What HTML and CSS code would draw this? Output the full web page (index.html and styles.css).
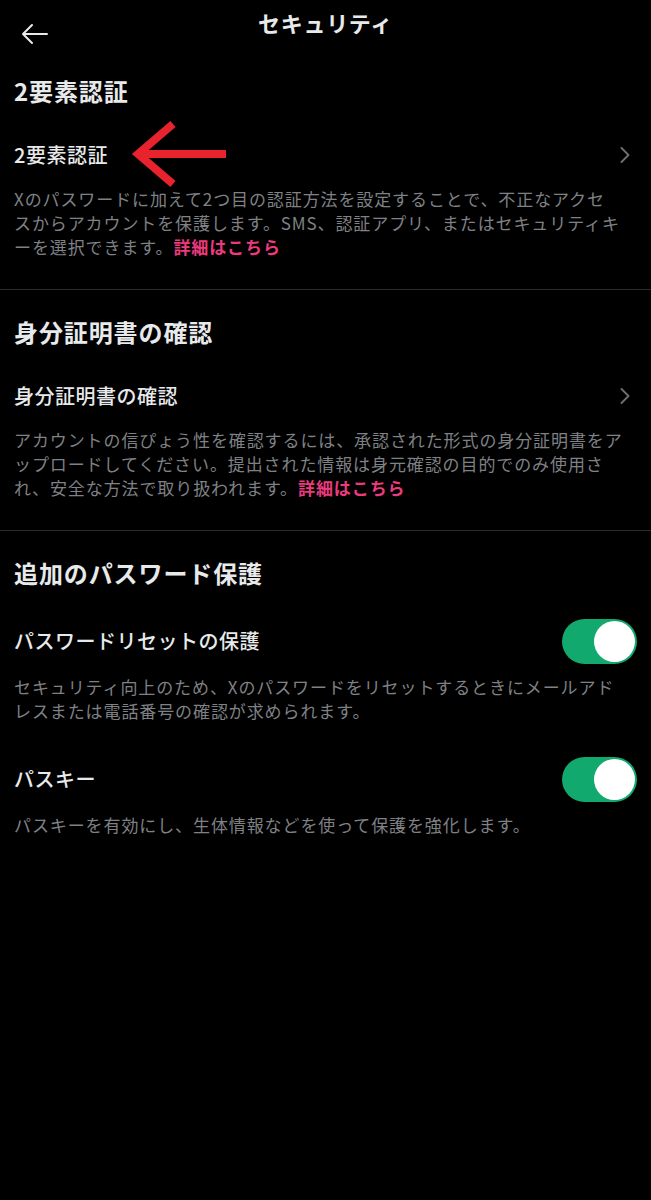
FILE: index.html
```html
<!DOCTYPE html>
<html lang="ja">
<head>
    <meta charset="utf-8">
    <link rel="stylesheet" href="styles.css">
    <title>セキュリティ</title>
</head>
<body>
    <header class="topbar">
        <button class="back-button" aria-label="戻る">
            <svg width="28" height="22" viewBox="0 0 28 22" fill="none" stroke="#e7e9ea" stroke-width="2" stroke-linecap="round" stroke-linejoin="round">
                <path d="M2 11 H26 M11 2 L2 11 L11 20"/>
            </svg>
        </button>
        <h1 class="topbar-title">セキュリティ</h1>
        <div></div>
    </header>

    <section class="group">
        <h2 class="group-title">2要素認証</h2>
        <div class="item">
            <div class="item-row">
                <span class="item-label">2要素認証</span>
                <svg class="chevron" width="10" height="16" viewBox="0 0 10 16" fill="none" stroke="#6e7276" stroke-width="1.8" stroke-linecap="round" stroke-linejoin="round">
                    <path d="M1.5 1 L8.5 8 L1.5 15"/>
                </svg>
                <!-- annotation arrow -->
                <svg class="annotation" width="102" height="68" viewBox="0 0 102 68" fill="none" stroke="#e8232d" stroke-width="8">
                    <path d="M45 4 L10 34 L45 64 M10 34 H98"/>
                </svg>
            </div>
            <p class="item-desc">Xのパスワードに加えて2つ目の認証方法を設定することで、不正なアクセ<br>スからアカウントを保護します。SMS、認証アプリ、またはセキュリティキ<br>ーを選択できます。<a class="more-link" href="#">詳細はこちら</a></p>
        </div>
    </section>

    <section class="group">
        <h2 class="group-title">身分証明書の確認</h2>
        <div class="item">
            <div class="item-row">
                <span class="item-label">身分証明書の確認</span>
                <svg class="chevron" width="10" height="16" viewBox="0 0 10 16" fill="none" stroke="#6e7276" stroke-width="1.8" stroke-linecap="round" stroke-linejoin="round">
                    <path d="M1.5 1 L8.5 8 L1.5 15"/>
                </svg>
            </div>
            <p class="item-desc">アカウントの信ぴょう性を確認するには、承認された形式の身分証明書をア<br>ップロードしてください。提出された情報は身元確認の目的でのみ使用さ<br>れ、安全な方法で取り扱われます。<a class="more-link" href="#">詳細はこちら</a></p>
        </div>
    </section>

    <section class="group group-last">
        <h2 class="group-title">追加のパスワード保護</h2>
        <div class="item item-toggle">
            <div class="item-row">
                <span class="item-label">パスワードリセットの保護</span>
                <span class="toggle is-on"></span>
            </div>
            <p class="item-desc">セキュリティ向上のため、Xのパスワードをリセットするときにメールアド<br>レスまたは電話番号の確認が求められます。</p>
        </div>
        <div class="item item-toggle">
            <div class="item-row">
                <span class="item-label">パスキー</span>
                <span class="toggle is-on"></span>
            </div>
            <p class="item-desc">パスキーを有効にし、生体情報などを使って保護を強化します。</p>
        </div>
    </section>
</body>
</html>
```

FILE: styles.css
```css
html {
    background-color: #000;
}

body {
    margin: 0;
    min-height: 1200px;
    background-color: #000;
    color: #e7e9ea;
    font-family: "Noto Sans CJK JP", "Noto Sans", sans-serif;
}

.topbar {
    display: grid;
    grid-template-columns: 1fr auto 1fr;
    height: 49px;
}

.back-button {
    align-self: start;
    justify-self: start;
    margin: 23px 0 0 21px;
    padding: 0;
    border: none;
    background: none;
    line-height: 0;
    cursor: pointer;
}

.topbar-title {
    margin: 7px 0 0;
    font-size: 22px;
    line-height: 30px;
    font-weight: 700;
    letter-spacing: 0.7px;
}

.group {
    padding: 26px 21px 30px 14px;
    border-bottom: 1px solid #2a2d30;
}

.group-last {
    border-bottom: none;
}

.group-title {
    margin: 0;
    font-size: 24px;
    line-height: 32px;
    font-weight: 700;
    letter-spacing: 0.9px;
}

.item {
    margin-top: 26px;
}

.item-toggle + .item-toggle {
    margin-top: 30px;
}

.item-row {
    position: relative;
    display: flex;
    align-items: center;
    justify-content: space-between;
    min-height: 44px;
}

.item-toggle .item-row {
    min-height: 52px;
}

.item-label {
    font-size: 20px;
    line-height: 28px;
    font-weight: 500;
    letter-spacing: 0.5px;
}

.chevron {
    flex-shrink: 0;
}

.annotation {
    position: absolute;
    left: 114px;
    top: -13px;
}

.item-desc {
    margin: 10px 0 0;
    font-size: 17px;
    line-height: 24px;
    letter-spacing: 0.9px;
    color: #7f8185;
    white-space: nowrap;
}

.item-toggle .item-desc {
    margin-top: 8px;
}

.more-link {
    color: #ec3a7f;
    font-weight: 600;
    text-decoration: none;
}

.toggle {
    position: relative;
    flex-shrink: 0;
    width: 75px;
    height: 45px;
    margin-right: -7px;
    border-radius: 23px;
    background-color: #565a5e;
}

.toggle.is-on {
    background-color: #12a96e;
}

.toggle::after {
    content: "";
    position: absolute;
    top: 2px;
    left: 2px;
    width: 41px;
    height: 41px;
    border-radius: 50%;
    background-color: #fff;
}

.toggle.is-on::after {
    left: auto;
    right: 2px;
}
```
